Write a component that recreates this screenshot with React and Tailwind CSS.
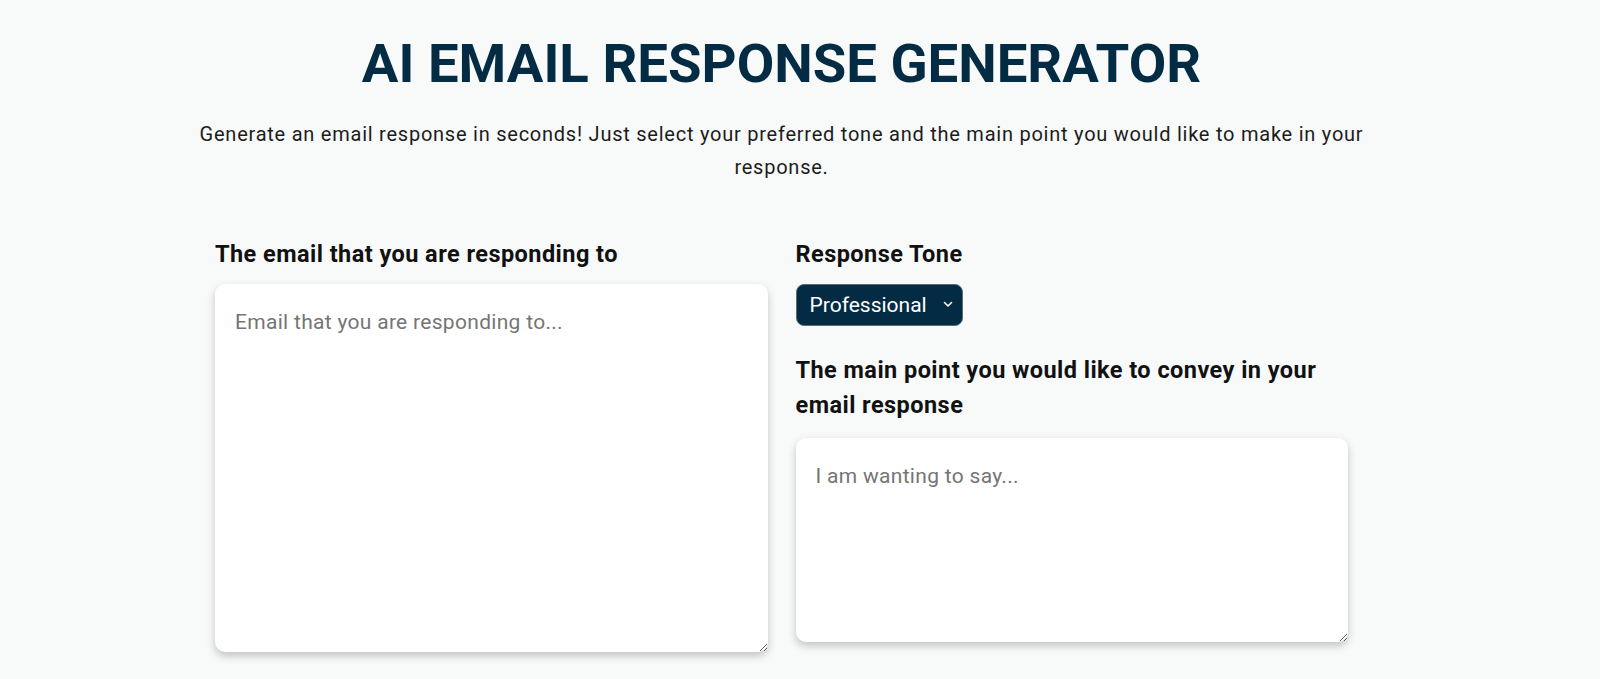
import React, { useState } from 'react';

const TONES = ['Professional', 'Friendly', 'Formal', 'Casual', 'Apologetic'];

const FieldLabel = ({ children, className = '' }) => (
  <label className={`block text-[23.5px] leading-[35px] font-bold tracking-[0.45px] text-[#111] ${className}`}>{children}</label>
);

const App = () => {
  const [tone, setTone] = useState('Professional');

  return (
    <div className="min-h-screen bg-[#f8f9f9] font-['Roboto','Liberation_Sans',sans-serif] pr-[37px]">
      <div className="pt-[31px]">
        <h1 className="text-center text-[54.5px] leading-[1.2] font-bold text-[#032b43]">
          AI EMAIL RESPONSE GENERATOR
        </h1>
        <p className="mx-auto mt-[22px] max-w-[1200px] text-center text-[20px] leading-[33px] tracking-[0.76px] text-[#1c1c1c]">
          Generate an email response in seconds! Just select your preferred tone and the main point you would like to make in your response.
        </p>
      </div>

      {/* Form: original email on the left, tone + main point on the right */}
      <div className="mx-auto mt-[53px] grid w-[1133px] grid-cols-2 gap-x-[28px] pb-[24px]">
        <div className="flex flex-col">
          <FieldLabel>The email that you are responding to</FieldLabel>
          <textarea
            placeholder="Email that you are responding to..."
            className="mt-[12px] h-[368px] w-full rounded-[10px] bg-white px-[20px] pt-[23px] text-[21px] tracking-[0.3px] text-[#222] placeholder:text-[#757575] shadow-[0_4px_9px_rgba(0,0,0,0.22)] outline-none"
          />
        </div>

        <div className="flex flex-col">
          <FieldLabel>Response Tone</FieldLabel>
          <div className="relative mt-[12px] w-[167px]">
            <select
              value={tone}
              onChange={(e) => setTone(e.target.value)}
              className="h-[42px] w-full appearance-none rounded-[8px] border border-[#5b6b76] bg-[#032b43] pl-[13px] pr-[28px] text-[21px] text-white outline-none"
            >
              {TONES.map((t) => (
                <option key={t} value={t}>{t}</option>
              ))}
            </select>
            <svg
              className="pointer-events-none absolute right-[10px] top-[17px]"
              width="10"
              height="7"
              viewBox="0 0 10 7"
              fill="none"
            >
              <path d="M1.5 1.5l3.5 3.5 3.5-3.5" stroke="white" strokeWidth="1.6" strokeLinecap="round" strokeLinejoin="round" />
            </svg>
          </div>

          <FieldLabel className="mt-[27px]">The main point you would like to convey in your email response</FieldLabel>
          <textarea
            placeholder="I am wanting to say..."
            className="mt-[15px] h-[204px] w-full rounded-[10px] bg-white px-[20px] pt-[23px] text-[21px] tracking-[0.3px] text-[#222] placeholder:text-[#757575] shadow-[0_4px_9px_rgba(0,0,0,0.22)] outline-none"
          />
        </div>
      </div>
    </div>
  );
};

export default App;
